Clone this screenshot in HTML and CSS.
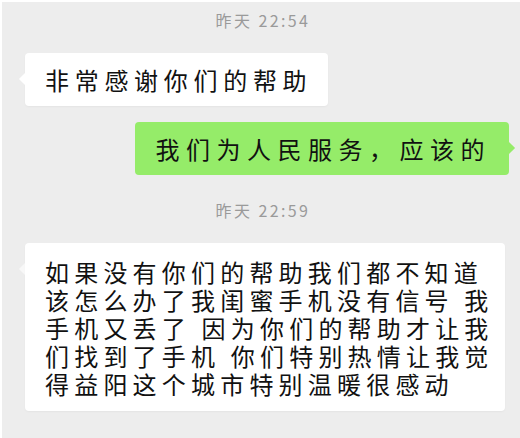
FILE: index.html
```html
<!DOCTYPE html>
<html lang="zh-CN">
<head>
  <meta charset="UTF-8" />
  <meta name="viewport" content="width=device-width, initial-scale=1" />
  <title>聊天记录</title>
  <link rel="stylesheet" href="styles.css">
</head>
<body>
  <div class="chat">
    <div class="time">昨天 22:54</div>
    <div class="row">
      <div class="bubble in">非常感谢你们的帮助</div>
    </div>
    <div class="row out-row">
      <div class="bubble out">我们为人民服务，应该的</div>
    </div>
    <div class="time">昨天 22:59</div>
    <div class="row">
      <div class="bubble in long">
        <p>如果没有你们的帮助我们都不知道</p>
        <p>该怎么办了我闺蜜手机没有信号 我</p>
        <p>手机又丢了 因为你们的帮助才让我</p>
        <p>们找到了手机 你们特别热情让我觉</p>
        <p>得益阳这个城市特别温暖很感动</p>
      </div>
    </div>
  </div>
</body>
</html>
```

FILE: styles.css
```css
:root {
  --bg: #ededed;
  --bubble-in: #ffffff;
  --bubble-out: #95ec69;
  --text: #111111;
  --time: #9a9a9a;
}

* {
  box-sizing: border-box;
  margin: 0;
  padding: 0;
}

html, body {
  height: 100%;
}

body {
  background: var(--bg);
  border-top: 2px solid #fff;
  border-left: 2px solid #fff;
  font-family: "Noto Sans CJK SC", "Noto Sans", sans-serif;
  color: var(--text);
  overflow: hidden;
}

.chat {
  display: flex;
  flex-direction: column;
  padding-top: 8px;
}

/* Timestamp */
.time {
  text-align: center;
  font-size: 16px;
  line-height: 20px;
  letter-spacing: 2.4px;
  color: var(--time);
  padding-left: 4px;
}

.row {
  display: flex;
  padding-left: 23px;
  margin-top: 23px;
}
.out-row {
  justify-content: flex-end;
  padding-right: 11px;
  margin-top: 16px;
  margin-bottom: 25px;
}

.bubble {
  position: relative;
  font-size: 24px;
  line-height: 29px;
  letter-spacing: 5.7px;
  padding: 12px 16px 12px 20px;
  border-radius: 4px;
  white-space: nowrap;
}
.bubble::before {
  content: "";
  position: absolute;
  top: 21px;
  width: 10px;
  height: 10px;
  transform: rotate(45deg);
}

.in {
  background: var(--bubble-in);
  box-shadow: 0 1px 2px rgba(0, 0, 0, 0.04);
}
.in::before {
  left: -4px;
  background: var(--bubble-in);
}

.out {
  background: var(--bubble-out);
  padding: 12px 18px 12px 21px;
  letter-spacing: 6.5px;
}
.out::before {
  right: -4px;
  background: var(--bubble-out);
}

.long {
  padding: 15px 14px 13px 20px;
  line-height: 28px;
  width: 480px;
  letter-spacing: 5.2px;
}
.long::before {
  opacity: 0.6;
}
```
